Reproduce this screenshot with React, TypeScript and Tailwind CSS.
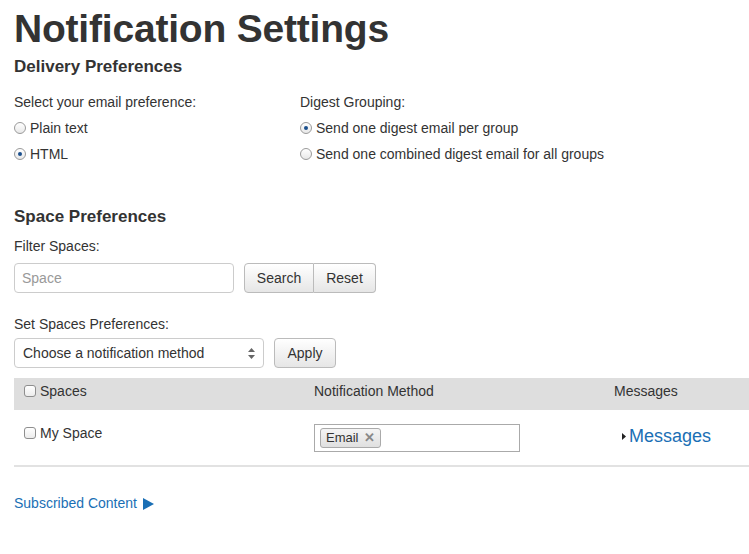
import { useState } from 'react'

function Radio({ checked }: { checked: boolean }) {
    return (
        <span className="inline-flex w-[12px] h-[12px] rounded-full border border-[#9a9a9a] bg-gradient-to-b from-white to-[#e8e8e8] items-center justify-center mr-[4px] shrink-0">
            {checked && <span className="w-[4px] h-[4px] rounded-full bg-[#1a4f8c]" />}
        </span>
    )
}

function Box() {
    return <span className="inline-block w-[12px] h-[12px] rounded-[3px] border border-[#8e8e8e] bg-gradient-to-b from-white to-[#ececec] mr-[4px] shrink-0" />
}

export default function App() {
    const [space, setSpace] = useState('')
    return (
        <div className="w-[749px] h-[554px] overflow-hidden bg-white text-[#333] font-['Liberation_Sans',Arial,sans-serif] pl-[14px]">
            <h1 className="text-[39px] leading-[44px] font-bold tracking-[-0.2px] mt-[7px] text-[#333]">Notification Settings</h1>
            <h2 className="text-[17px] leading-[20px] font-bold mt-[6px]">Delivery Preferences</h2>

            <div className="flex mt-[17px] text-[14px] leading-[16px]">
                <div className="w-[286px]">
                    <p>Select your email preference:</p>
                    <label className="flex items-center mt-[10px]"><Radio checked={false} />Plain text</label>
                    <label className="flex items-center mt-[10px]"><Radio checked />HTML</label>
                </div>
                <div>
                    <p>Digest Grouping:</p>
                    <label className="flex items-center mt-[10px]"><Radio checked />Send one digest email per group</label>
                    <label className="flex items-center mt-[10px]"><Radio checked={false} />Send one combined digest email for all groups</label>
                </div>
            </div>

            <h2 className="text-[17px] leading-[20px] font-bold mt-[45px]">Space Preferences</h2>
            <p className="text-[14px] leading-[16px] mt-[11px]">Filter Spaces:</p>
            <div className="flex items-center mt-[9px] text-[14px]">
                <input
                    className="w-[220px] h-[30px] border border-[#ccc] rounded-[4px] px-[7px] text-[14px] placeholder:text-[#999] outline-none"
                    placeholder="Space"
                    value={space}
                    onChange={(e) => setSpace(e.target.value)}
                />
                <button className="ml-[10px] w-[70px] h-[30px] border border-[#bbb] rounded-l-[4px] bg-gradient-to-b from-white to-[#e6e6e6] text-[#333]">Search</button>
                <button className="w-[62px] h-[30px] border border-l-0 border-[#bbb] rounded-r-[4px] bg-gradient-to-b from-white to-[#e6e6e6] text-[#333]">Reset</button>
            </div>

            <p className="text-[14px] leading-[16px] mt-[23px]">Set Spaces Preferences:</p>
            <div className="flex items-center mt-[6px] text-[14px]">
                <div className="w-[250px] h-[30px] border border-[#ccc] rounded-[4px] flex items-center justify-between px-[8px] bg-white">
                    <span>Choose a notification method</span>
                    <svg width="7" height="11" viewBox="0 0 7 11"><path d="M3.5 0L7 4H0z M3.5 11L0 7h7z" fill="#666" /></svg>
                </div>
                <button className="ml-[10px] w-[62px] h-[30px] border border-[#bbb] rounded-[4px] bg-gradient-to-b from-white to-[#e6e6e6] text-[#333]">Apply</button>
            </div>

            <div className="mt-[10px] text-[14px]">
                <div className="flex items-start pt-[5px] h-[32px] leading-[16px] bg-[#dedede] text-[#333]">
                    <div className="w-[300px] pl-[10px] flex items-center"><Box />Spaces</div>
                    <div className="w-[300px]">Notification Method</div>
                    <div>Messages</div>
                </div>
                <div className="flex h-[57px] border-b-2 border-[#e2e2e2]">
                    <div className="w-[300px] pl-[10px] flex items-center h-[46px]"><Box />My Space</div>
                    <div className="w-[300px] pt-[14px]">
                        <div className="w-[206px] h-[28px] border border-[#aaa] flex items-center px-[5px]">
                            <span className="h-[20px] border border-[#aaa] rounded-[3px] bg-gradient-to-b from-[#f4f4f4] to-[#e0e0e0] px-[5px] flex items-center text-[13px]">
                                Email<span className="ml-[5px] text-[#888] font-bold text-[13px]">✕</span>
                            </span>
                        </div>
                    </div>
                    <div className="pl-[8px] pt-[16px] flex items-start">
                        <svg width="4" height="7" viewBox="0 0 4 7" className="mt-[7px] mr-[3px]"><path d="M0 0L4 3.5L0 7z" fill="#222" /></svg>
                        <a className="text-[18px] leading-[20px] text-[#1a6fb5]">Messages</a>
                    </div>
                </div>
            </div>

            <a className="flex items-center mt-[26px] text-[14px] text-[#1a6fb5]">
                Subscribed Content
                <svg width="11" height="12" viewBox="0 0 11 12" className="ml-[6px]"><path d="M0 0L11 6L0 12z" fill="#1a6fb5" /></svg>
            </a>
        </div>
    )
}
